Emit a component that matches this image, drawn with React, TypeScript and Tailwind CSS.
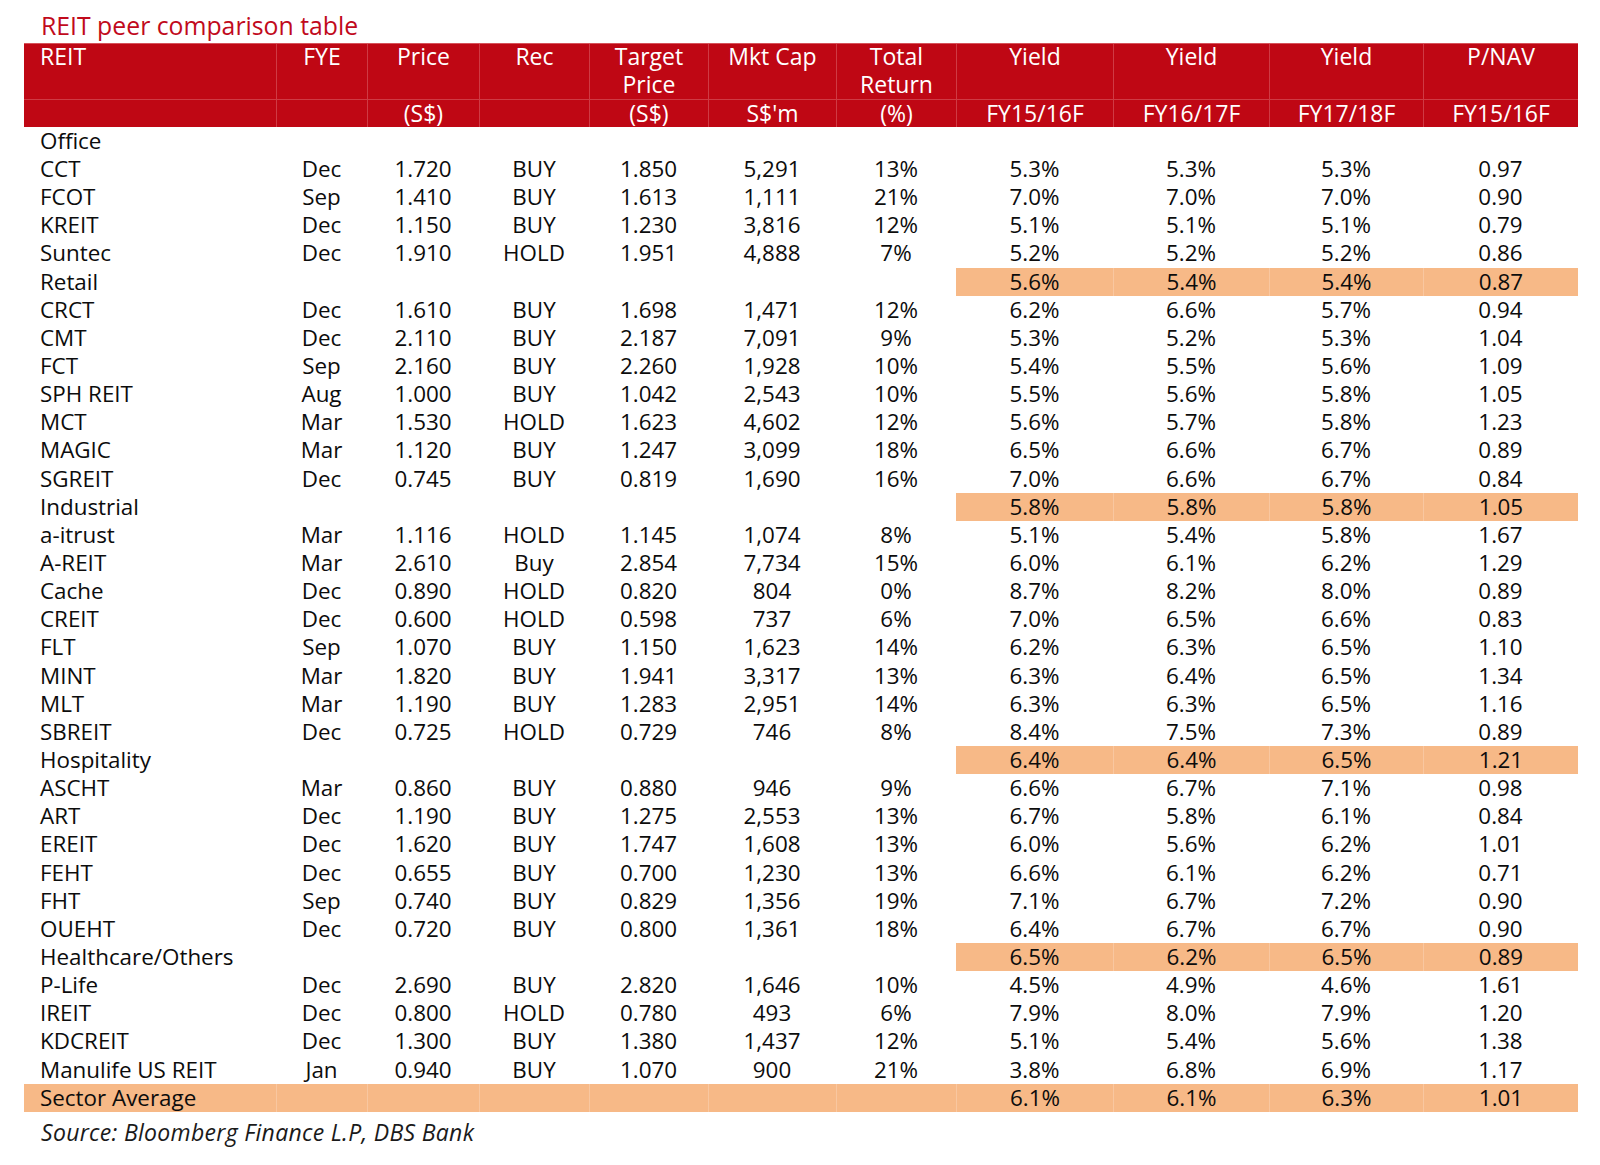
import React from "react";

const GRID =
  "grid grid-cols-[252px_91px_112px_110px_119px_128px_120px_157px_156px_154px_155px]";

type Row =
  | { kind: "section"; name: string; vals?: string[] }
  | { kind: "data"; cells: string[] };

const S = (name: string, vals?: string[]): Row => ({ kind: "section", name, vals });
const D = (s: string): Row => ({ kind: "data", cells: s.split("|") });

const rows: Row[] = [
  S("Office"),
  D("CCT|Dec|1.720|BUY|1.850|5,291|13%|5.3%|5.3%|5.3%|0.97"),
  D("FCOT|Sep|1.410|BUY|1.613|1,111|21%|7.0%|7.0%|7.0%|0.90"),
  D("KREIT|Dec|1.150|BUY|1.230|3,816|12%|5.1%|5.1%|5.1%|0.79"),
  D("Suntec|Dec|1.910|HOLD|1.951|4,888|7%|5.2%|5.2%|5.2%|0.86"),
  S("Retail", ["5.6%", "5.4%", "5.4%", "0.87"]),
  D("CRCT|Dec|1.610|BUY|1.698|1,471|12%|6.2%|6.6%|5.7%|0.94"),
  D("CMT|Dec|2.110|BUY|2.187|7,091|9%|5.3%|5.2%|5.3%|1.04"),
  D("FCT|Sep|2.160|BUY|2.260|1,928|10%|5.4%|5.5%|5.6%|1.09"),
  D("SPH REIT|Aug|1.000|BUY|1.042|2,543|10%|5.5%|5.6%|5.8%|1.05"),
  D("MCT|Mar|1.530|HOLD|1.623|4,602|12%|5.6%|5.7%|5.8%|1.23"),
  D("MAGIC|Mar|1.120|BUY|1.247|3,099|18%|6.5%|6.6%|6.7%|0.89"),
  D("SGREIT|Dec|0.745|BUY|0.819|1,690|16%|7.0%|6.6%|6.7%|0.84"),
  S("Industrial", ["5.8%", "5.8%", "5.8%", "1.05"]),
  D("a-itrust|Mar|1.116|HOLD|1.145|1,074|8%|5.1%|5.4%|5.8%|1.67"),
  D("A-REIT|Mar|2.610|Buy|2.854|7,734|15%|6.0%|6.1%|6.2%|1.29"),
  D("Cache|Dec|0.890|HOLD|0.820|804|0%|8.7%|8.2%|8.0%|0.89"),
  D("CREIT|Dec|0.600|HOLD|0.598|737|6%|7.0%|6.5%|6.6%|0.83"),
  D("FLT|Sep|1.070|BUY|1.150|1,623|14%|6.2%|6.3%|6.5%|1.10"),
  D("MINT|Mar|1.820|BUY|1.941|3,317|13%|6.3%|6.4%|6.5%|1.34"),
  D("MLT|Mar|1.190|BUY|1.283|2,951|14%|6.3%|6.3%|6.5%|1.16"),
  D("SBREIT|Dec|0.725|HOLD|0.729|746|8%|8.4%|7.5%|7.3%|0.89"),
  S("Hospitality", ["6.4%", "6.4%", "6.5%", "1.21"]),
  D("ASCHT|Mar|0.860|BUY|0.880|946|9%|6.6%|6.7%|7.1%|0.98"),
  D("ART|Dec|1.190|BUY|1.275|2,553|13%|6.7%|5.8%|6.1%|0.84"),
  D("EREIT|Dec|1.620|BUY|1.747|1,608|13%|6.0%|5.6%|6.2%|1.01"),
  D("FEHT|Dec|0.655|BUY|0.700|1,230|13%|6.6%|6.1%|6.2%|0.71"),
  D("FHT|Sep|0.740|BUY|0.829|1,356|19%|7.1%|6.7%|7.2%|0.90"),
  D("OUEHT|Dec|0.720|BUY|0.800|1,361|18%|6.4%|6.7%|6.7%|0.90"),
  S("Healthcare/Others", ["6.5%", "6.2%", "6.5%", "0.89"]),
  D("P-Life|Dec|2.690|BUY|2.820|1,646|10%|4.5%|4.9%|4.6%|1.61"),
  D("IREIT|Dec|0.800|HOLD|0.780|493|6%|7.9%|8.0%|7.9%|1.20"),
  D("KDCREIT|Dec|1.300|BUY|1.380|1,437|12%|5.1%|5.4%|5.6%|1.38"),
  D("Manulife US REIT|Jan|0.940|BUY|1.070|900|21%|3.8%|6.8%|6.9%|1.17"),
];

const header: [string, string, string][] = [
  ["REIT", "", ""],
  ["FYE", "", ""],
  ["Price", "", "(S$)"],
  ["Rec", "", ""],
  ["Target", "Price", "(S$)"],
  ["Mkt Cap", "", "S$'m"],
  ["Total", "Return", "(%)"],
  ["Yield", "", "FY15/16F"],
  ["Yield", "", "FY16/17F"],
  ["Yield", "", "FY17/18F"],
  ["P/NAV", "", "FY15/16F"],
];

const ROW_H = "h-[28.15px]";

function DataRow({ cells }: { cells: string[] }) {
  return (
    <div className={`${GRID} ${ROW_H}`}>
      {cells.map((c, i) => (
        <div
          key={i}
          className={`flex items-center ${i === 0 ? "justify-start pl-[16px]" : "justify-center"} whitespace-nowrap`}
        >
          {c}
        </div>
      ))}
    </div>
  );
}

function SectionRow({ name, vals }: { name: string; vals?: string[] }) {
  return (
    <div className={`${GRID} ${ROW_H}`}>
      <div className="flex items-center pl-[16px] whitespace-nowrap">{name}</div>
      {Array.from({ length: 6 }).map((_, i) => (
        <div key={i} />
      ))}
      {[0, 1, 2, 3].map((i) => (
        <div
          key={i}
          className={`flex items-center justify-center ${vals ? "bg-[#f7b987]" : ""} ${vals && i > 0 ? "border-l border-[#f9c7a0]" : ""}`}
        >
          {vals ? vals[i] : ""}
        </div>
      ))}
    </div>
  );
}

export default function App() {
  return (
    <div className="w-[1600px] h-[1165px] bg-white font-['Open_Sans',sans-serif] text-[#0c0c0c]">
      <div className="h-[43px] pl-[41px] pt-[10px]">
        <div className="text-[24.8px] leading-[30px] text-[#c10a1c]">REIT peer comparison table</div>
      </div>
      <div className="ml-[24px] w-[1554px]">
        {/* Header */}
        <div className={`${GRID} bg-[#bf0714] text-white text-[23px] border-t border-[#d6525a]`}>
          {header.map((h, i) => (
            <div key={i} className={`flex flex-col ${i > 0 ? "border-l border-[#cf3a44]" : ""}`}>
              <div
                className={`h-[25px] flex items-center leading-[25px] ${i === 0 ? "pl-[16px]" : "justify-center"}`}
              >
                {h[0]}
              </div>
              <div className={`h-[30px] flex items-center leading-[25px] ${i === 0 ? "pl-[16px]" : "justify-center"}`}>
                {h[1]}
              </div>
              <div
                className={`h-[28px] flex items-center leading-[25px] border-t border-[#cf3a44] ${i === 0 ? "pl-[16px]" : "justify-center"}`}
              >
                {h[2]}
              </div>
            </div>
          ))}
        </div>
        {/* Body */}
        <div className="text-[22.4px] leading-none">
          {rows.map((r, i) =>
            r.kind === "section" ? (
              <SectionRow key={i} name={r.name} vals={r.vals} />
            ) : (
              <DataRow key={i} cells={r.cells} />
            )
          )}
          <div className={`${GRID} ${ROW_H} bg-[#f7b987]`}>
            <div className="flex items-center pl-[16px] whitespace-nowrap">Sector Average</div>
            {Array.from({ length: 6 }).map((_, i) => (
              <div key={i} className="border-l border-[#f9c7a0]" />
            ))}
            {["6.1%", "6.1%", "6.3%", "1.01"].map((v, i) => (
              <div key={i} className="flex items-center justify-center border-l border-[#f9c7a0]">
                {v}
              </div>
            ))}
          </div>
        </div>
      </div>
      <div className="pl-[41px] pt-[6px] text-[23px] tracking-[0.3px] leading-[28px] italic text-[#1a1a1a]">
        Source: Bloomberg Finance L.P, DBS Bank
      </div>
    </div>
  );
}
